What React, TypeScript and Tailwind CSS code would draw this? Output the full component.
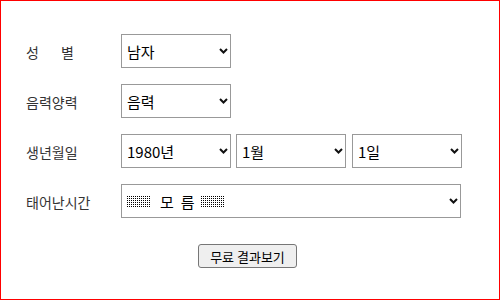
import React from "react";

const font = { fontFamily: '"Noto Sans CJK KR", "Liberation Sans", sans-serif' };

function Chevron() {
  return (
    <svg width="9" height="6" viewBox="0 0 9 6" className="shrink-0">
      <path d="M1 1 L4.5 4.5 L8 1" fill="none" stroke="#111" strokeWidth="2" />
    </svg>
  );
}

function FakeSelect({ w, children, className = "" }: { w: string; children: React.ReactNode; className?: string }) {
  return (
    <div
      className={`${w} ${className} h-[34px] border border-[#999] bg-white flex items-center justify-between pl-[5px] pr-[2px] text-[15px] text-black`}
    >
      <span className="flex items-center leading-none">{children}</span>
      <Chevron />
    </div>
  );
}

function Dots() {
  const dots = [];
  for (let r = 0; r < 6; r++) {
    for (let c = 0; c < 12; c++) {
      dots.push(<rect key={`${r}-${c}`} x={c * 2} y={r * 2} width="1" height="1" fill="#000" />);
    }
  }
  return (
    <svg width="23" height="11" className="block" shapeRendering="crispEdges">
      {dots}
    </svg>
  );
}

function Row({ label, children }: { label: React.ReactNode; children: React.ReactNode }) {
  return (
    <div className="flex items-center h-[34px]">
      <div className="w-[95px] text-[14px] text-[#333] leading-none pt-[2px]">{label}</div>
      <div className="flex items-center">{children}</div>
    </div>
  );
}

export default function App() {
  return (
    <div style={font} className="w-[500px] h-[300px] border border-[#ff0000] bg-white flex flex-col">
      <div className="pt-[33px] pl-[25px] flex flex-col gap-[16px]">
        <Row
          label={
            <span className="flex">
              <span>성</span>
              <span className="ml-[22px]">별</span>
            </span>
          }
        >
          <FakeSelect w="w-[110px]">남자</FakeSelect>
        </Row>
        <Row label="음력양력">
          <FakeSelect w="w-[110px]">음력</FakeSelect>
        </Row>
        <Row label="생년월일">
          <FakeSelect w="w-[110px]">1980년</FakeSelect>
          <FakeSelect w="w-[110px]" className="ml-[5px]">1월</FakeSelect>
          <FakeSelect w="w-[110px]" className="ml-[6px]">1일</FakeSelect>
        </Row>
        <Row label="태어난시간">
          <FakeSelect w="w-[340px]">
            <Dots />
            <span className="ml-[10px]">모</span>
            <span className="ml-[7px]">름</span>
            <span className="ml-[6px] flex items-center">
              <Dots />
            </span>
          </FakeSelect>
        </Row>
      </div>
      <div className="flex justify-center pr-[5px] mt-[26px]">
        <button className="w-[99px] h-[24px] border border-[#767676] rounded-[3px] bg-[#efefef] text-[13px] text-black leading-none flex items-center justify-center">
          무료 결과보기
        </button>
      </div>
    </div>
  );
}
